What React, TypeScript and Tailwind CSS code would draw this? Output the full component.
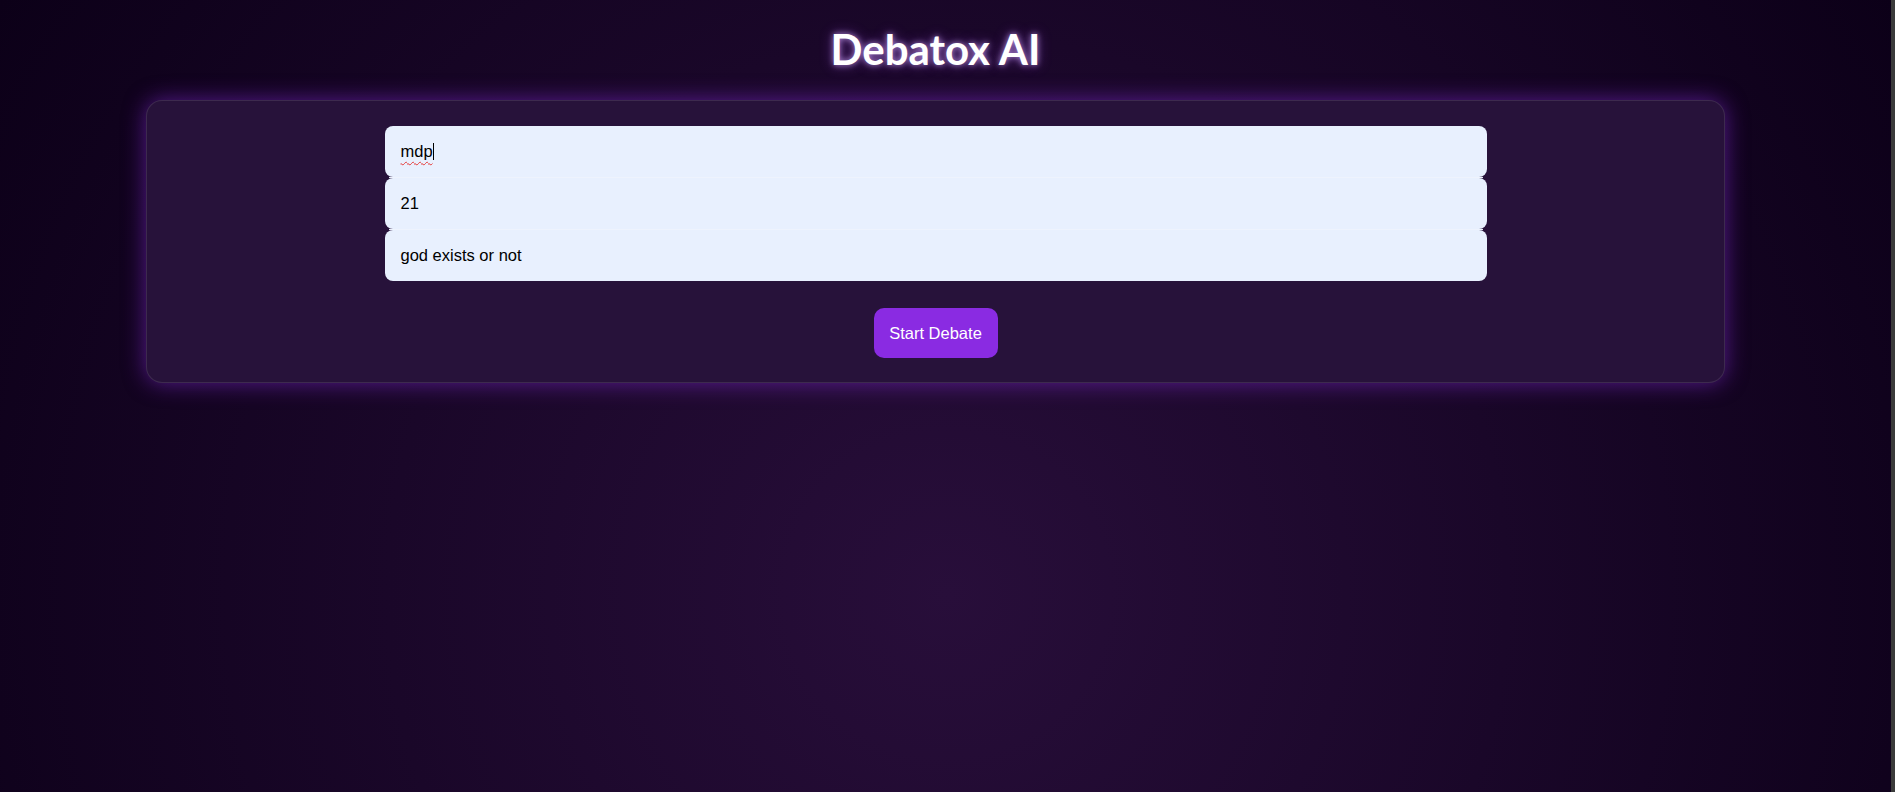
import React from 'react'

const Field = ({ value, spell, caret }: { value: string; spell?: boolean; caret?: boolean }) => {
  return (
    <div className="h-[51px] w-full bg-[#e8f0fe] rounded-[8px] px-4 flex items-center text-[16.5px] text-black">
      <span className={spell ? 'underline decoration-wavy decoration-[#e53935] decoration-1 underline-offset-[4px]' : ''}>
        {value}
      </span>
      {caret && <span className="w-px h-[17px] bg-black" />}
    </div>
  )
}

const Sep = () => <div className="h-px mx-[4px] bg-[#eef3fd]" />

export default function App() {
  return (
    <div
      className="w-full h-[792px] flex bg-[radial-gradient(circle_at_50%_75%,#280e3a_0%,#0c0018_100%)] overflow-hidden"
      style={{ fontFamily: "'Liberation Sans', Arial, sans-serif" }}
    >
      <div className="w-[1871px] flex flex-col">
        {/* Title */}
        <h1
          className="mt-[24px] text-center text-white text-[42px] font-bold leading-[50px] [text-shadow:0_0_6px_rgba(210,170,255,0.8),0_0_14px_rgba(168,85,247,0.45)]"
          style={{ fontFamily: 'Lato, sans-serif' }}
        >
          Debatox AI
        </h1>

        {/* Card */}
        <div className="mt-[26px] ml-[146px] w-[1579px] rounded-[16px] border border-white/10 bg-[#27123a] shadow-[0_0_22px_rgba(138,43,226,0.55)] pt-[25px] pb-[24px] flex flex-col items-center">
          <div className="w-[1102px] flex flex-col">
            <Field value="mdp" spell caret />
            <Sep />
            <Field value="21" />
            <Sep />
            <Field value="god exists or not" />
          </div>
          <button className="mt-[27px] w-[124px] h-[50px] rounded-[10px] bg-[#8a2be2] text-white text-[16.5px]">
            Start Debate
          </button>
        </div>
      </div>
      <div className="flex-1" />
      <div className="w-[4px] h-full bg-[#3b3b3b]" />
    </div>
  )
}
